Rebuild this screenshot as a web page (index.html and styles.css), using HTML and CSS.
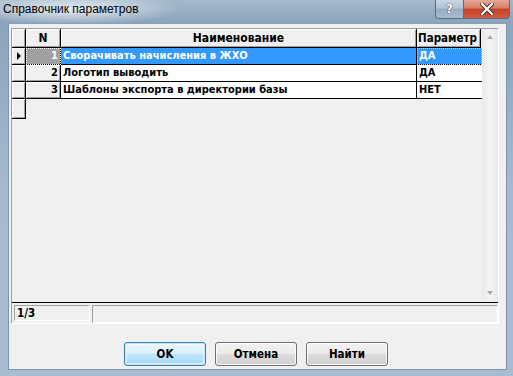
FILE: index.html
```html
<!DOCTYPE html>
<html lang="ru">
<head>
<meta charset="utf-8">
<link rel="stylesheet" href="styles.css">
<title>Справочник параметров</title>
</head>
<body>
<div class="window">
  <div class="titlebar">
    <span class="title">Справочник параметров</span>
    <div class="caption-btns">
      <div class="cbtn help">?</div>
      <div class="cbtn close">
        <svg width="14" height="12" viewBox="0 0 14 12"><path d="M2 1 L12 11 M12 1 L2 11" stroke="#3b2a26" stroke-width="4" stroke-linecap="square"/><path d="M2 1 L12 11 M12 1 L2 11" stroke="#fff" stroke-width="2.2" stroke-linecap="square"/></svg>
      </div>
    </div>
  </div>
  <div class="client">
    <div class="gridframe">
      <div class="gridmain">
        <div class="table">
          <div class="row head">
            <div class="c ind fixed"></div>
            <div class="c num fixed center">N</div>
            <div class="c name fixed center">Наименование</div>
            <div class="c param fixed">Параметр</div>
          </div>
          <div class="row sel">
            <div class="c ind fixed"><span class="tri"></span></div>
            <div class="c num cur">1</div>
            <div class="c name">Сворачивать начисления в ЖХО</div>
            <div class="c param focus">ДА</div>
          </div>
          <div class="row">
            <div class="c ind fixed"></div>
            <div class="c num fixed right">2</div>
            <div class="c name">Логотип выводить</div>
            <div class="c param">ДА</div>
          </div>
          <div class="row">
            <div class="c ind fixed"></div>
            <div class="c num fixed right">3</div>
            <div class="c name">Шаблоны экспорта в директории базы</div>
            <div class="c param">НЕТ</div>
          </div>
          <div class="row extra">
            <div class="c ind fixed"></div>
          </div>
        </div>
        <div class="vscroll">
          <span class="arrow up"></span>
          <span class="arrow down"></span>
        </div>
      </div>
      <div class="status">
        <div class="panel p1">1/3</div>
        <div class="panel p2"></div>
      </div>
    </div>
    <div class="buttons">
      <button class="btn default">OK</button>
      <button class="btn">Отмена</button>
      <button class="btn">Найти</button>
    </div>
  </div>
</div>
</body>
</html>
```

FILE: styles.css
```css
html, body {
  margin: 0;
  padding: 0;
}
body {
  width: 513px;
  height: 376px;
  overflow: hidden;
  background: #9fb5ca;
  font-family: "DejaVu Sans Condensed", "DejaVu Sans", sans-serif;
}
.window {
  width: 513px;
  height: 376px;
  display: flex;
  flex-direction: column;
  background: linear-gradient(to bottom, #92aac1 0px, #8ca5bd 30px, #a6bbcf 200px, #a9bdd0 376px);
  box-sizing: border-box;
}
.titlebar {
  height: 23px;
  display: flex;
  align-items: flex-start;
  justify-content: space-between;
  background:
    radial-gradient(ellipse 110px 16px at 72px 9px, rgba(255,255,255,0.75), rgba(255,255,255,0) 100%),
    linear-gradient(to bottom, #a4b9cc, #8aa3bb);
}
.title {
  font-family: "Liberation Sans", Arial, sans-serif;
  font-size: 12px;
  line-height: 14px;
  padding: 2px 0 0 3px;
  color: #000;
}
.caption-btns {
  display: flex;
  margin-right: 3px;
}
.cbtn {
  height: 19px;
  box-sizing: border-box;
  border: 1px solid #5a6c80;
  border-top: none;
  display: flex;
  align-items: center;
  justify-content: center;
}
.help {
  width: 28px;
  border-radius: 0 0 0 4px;
  border-right: none;
  background: linear-gradient(to bottom, #c9d6e3 0%, #b4c4d5 45%, #98adc2 50%, #a8bccf 100%);
  color: #fff;
  font-family: "DejaVu Sans", sans-serif;
  font-weight: bold;
  font-size: 12px;
  text-shadow: 0 0 1px #333, 0 0 1px #333;
}
.close {
  width: 47px;
  border-radius: 0 0 4px 0;
  background: linear-gradient(to bottom, #e7a796 0%, #d7806b 45%, #c3422a 50%, #d35a40 100%);
}
.client {
  flex: 1;
  margin: 0 6px 6px 8px;
  background: #f0f0f0;
  border: 1px solid #7f95ab;
  border-top-color: #8aa0b5;
  display: flex;
  flex-direction: column;
  box-sizing: border-box;
}
.gridframe {
  margin: 4px 0 0 2px;
  width: 488px;
  height: 296px;
  box-sizing: border-box;
  border: 1px solid;
  border-color: #a0a0a0 #fff #fff #a0a0a0;
  display: flex;
  flex-direction: column;
}
.gridmain {
  display: flex;
  height: 273px;
}
.table {
  width: 470px;
  display: flex;
  flex-direction: column;
  background: #f0f0f0;
}
.row {
  display: flex;
  height: 17px;
}
.row.head {
  height: 19px;
}
.c {
  box-sizing: border-box;
  height: 100%;
  border-right: 1px solid #000;
  border-bottom: 1px solid #000;
  background: #fff;
  font-size: 11px;
  font-weight: bold;
  line-height: 16px;
  padding: 0 2px;
  white-space: nowrap;
  overflow: hidden;
  color: #000;
}
.head .c {
  line-height: 18px;
  font-size: 12px;
}
.head .param { font-size: 11.5px; }
.ind { width: 14px; padding: 0; position: relative; }
.num { width: 35px; }
.name { width: 356px; }
.param { width: 65px; border-right: none; }
.head .param { border-right: 1px solid #000; width: 64px; padding: 0 1px; }
.fixed {
  background: #f0f0f0;
  box-shadow: inset 1px 1px 0 #fff, inset -1px -1px 0 #a0a0a0;
}
.center { text-align: center; }
.right { text-align: right; }
.sel .c:not(.fixed) {
  background: #3399ff;
  color: #fff;
}
.sel .num.cur {
  background: #a0a0a0;
  color: #fff;
  text-align: right;
  outline: 1px dotted #fff;
  outline-offset: -1px;
}
.sel .param.focus {
  outline: 1px dotted #ffcc66;
  outline-offset: -1px;
}
.tri {
  position: absolute;
  left: 5px;
  top: 4px;
  width: 0;
  height: 0;
  border-top: 4px solid transparent;
  border-bottom: 4px solid transparent;
  border-left: 4px solid #000;
}
.row.extra {
  height: 20px;
}
.vscroll {
  width: 16px;
  position: relative;
  background: linear-gradient(to right, #eaeaea, #f2f2f2 40%, #f2f2f2 60%, #e8e8e8);
}
.arrow {
  position: absolute;
  left: 5px;
  width: 0;
  height: 0;
  border-left: 3px solid transparent;
  border-right: 3px solid transparent;
}
.arrow.up {
  top: 6px;
  border-bottom: 4px solid #a7a7a7;
}
.arrow.down {
  bottom: 7px;
  border-top: 4px solid #a7a7a7;
}
.status {
  border-top: 1px solid #000;
  flex: 1;
  display: flex;
  align-items: flex-start;
  padding: 2px 0 0 2px;
  gap: 2px;
  background: #f0f0f0;
}
.panel {
  height: 16px;
  box-sizing: border-box;
  border: 1px solid;
  border-color: #a0a0a0 #fff #fff #a0a0a0;
  font-size: 11.5px;
  font-weight: bold;
  line-height: 14px;
  padding-left: 2px;
}
.p1 { width: 76px; }
.p2 { flex: 1; height: 18px; margin-top: 0; }
.buttons {
  display: flex;
  gap: 9px;
  padding: 18px 0 0 115px;
}
.btn {
  width: 82px;
  height: 24px;
  box-sizing: border-box;
  border: 1px solid #707070;
  border-radius: 3px;
  background: linear-gradient(to bottom, #f2f2f2 0%, #ebebeb 50%, #dddddd 51%, #cfcfcf 100%);
  box-shadow: inset 0 0 0 1px rgba(255,255,255,0.8);
  font-family: "DejaVu Sans Condensed", "DejaVu Sans", sans-serif;
  font-size: 11.5px;
  font-weight: bold;
  color: #000;
  padding: 0;
}
.btn.default {
  border-color: #3c7fb1;
  box-shadow: inset 0 0 0 1px #bde6fd, inset 0 0 0 2px rgba(255,255,255,0.5);
  background: linear-gradient(to bottom, #eaf6fd 0%, #d9f0fc 50%, #bee6fd 51%, #a7d9f5 100%);
}
```
